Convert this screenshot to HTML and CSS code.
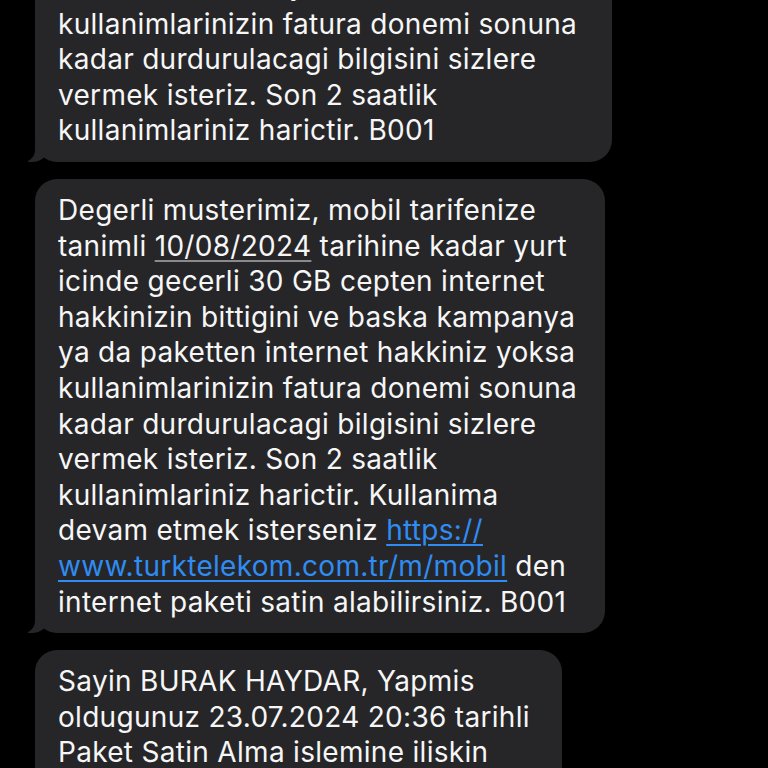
FILE: index.html
```html
<!DOCTYPE html>
<html>
<head>
<meta charset="utf-8">
<link rel="stylesheet" href="styles.css">
</head>
<body>
<div class="thread">
  <div class="bubble b1">
    <p class="msg"><span class="cut">internet hakkiniz yoksa</span>kullanimlarinizin fatura donemi sonuna<br>kadar durdurulacagi bilgisini sizlere<br>vermek isteriz. Son 2 saatlik<br>kullanimlariniz harictir. B001</p>
  </div>
  <div class="bubble b2">
    <p class="msg">Degerli musterimiz, mobil tarifenize<br>tanimli <span class="date">10/08/2024</span> tarihine kadar yurt<br>icinde gecerli 30 GB cepten internet<br>hakkinizin bittigini ve baska kampanya<br>ya da paketten internet hakkiniz yoksa<br>kullanimlarinizin fatura donemi sonuna<br>kadar durdurulacagi bilgisini sizlere<br>vermek isteriz. Son 2 saatlik<br>kullanimlariniz harictir. Kullanima<br>devam etmek isterseniz <span class="link">https://</span><br><span class="link">www.turktelekom.com.tr/m/mobil</span> den<br>internet paketi satin alabilirsiniz. B001</p>
  </div>
  <div class="bubble b3 open">
    <p class="msg">Sayin BURAK HAYDAR, Yapmis<br>oldugunuz 23.07.2024 20:36 tarihli<br>Paket Satin Alma islemine iliskin<br>odemeniz alinmistir. Bizi tercih</p>
  </div>
</div>
</body>
</html>
```
FILE: styles.css
```css
html, body {
  margin: 0;
  padding: 0;
  background: #000;
  height: 768px;
  overflow: hidden;
}
.thread {
  display: flex;
  flex-direction: column;
  align-items: flex-start;
  gap: 17px;
  padding-left: 35px;
  margin-top: -43px;
}
.bubble {
  position: relative;
  background: #262628;
  border-radius: 22px;
  padding: 14px 20px 13px 23px;
  box-sizing: border-box;
}
.bubble::before {
  content: "";
  position: absolute;
  bottom: 0;
  left: -7px;
  width: 20px;
  height: 20px;
  background: #262628;
  border-bottom-right-radius: 16px 14px;
}
.bubble::after {
  content: "";
  position: absolute;
  bottom: 0;
  left: -26px;
  width: 26px;
  height: 22px;
  background: #000;
  border-bottom-right-radius: 12px;
}
.open::before, .open::after { display: none; }
.b1 { width: 577px; }
.b2 { width: 570px; }
.b3 { width: 527px; }
.msg {
  margin: 0;
  font-family: Inter, "Noto Sans", sans-serif;
  font-size: 28px;
  line-height: 35.6px;
  color: #f6f6f7;
  letter-spacing: 0.3px;
  white-space: nowrap;
}
.cut {
  display: block;
  margin-top: -3px;
  height: 38.6px;
}
.date {
  text-decoration: underline;
  text-decoration-color: #8a8a8e;
  text-underline-offset: 4px;
  text-decoration-thickness: 1.5px;
}
.link {
  color: #2f8cf2;
  text-decoration: underline;
  text-underline-offset: 4px;
  text-decoration-thickness: 1.5px;
}
```
